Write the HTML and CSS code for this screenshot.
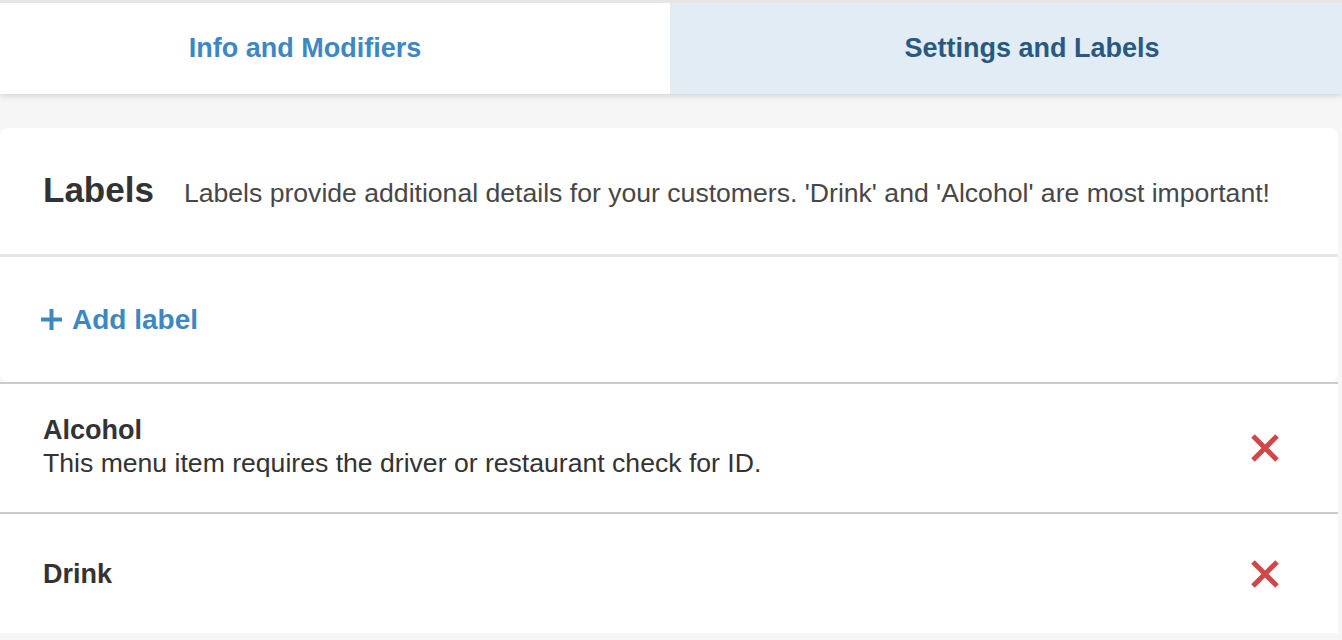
FILE: index.html
```html
<!DOCTYPE html>
<html lang="en">
<head>
    <meta charset="UTF-8">
    <meta name="viewport" content="width=device-width, initial-scale=1.0">
    <title>Settings and Labels</title>
    <link rel="stylesheet" href="styles.css">
</head>
<body>
    <nav class="tabs">
        <a class="tab tab-info" href="#">Info and Modifiers</a>
        <a class="tab tab-settings active" href="#">Settings and Labels</a>
    </nav>

    <main class="content">
        <section class="card">
            <div class="card-head">
                <h2>Labels</h2>
                <p>Labels provide additional details for your customers. 'Drink' and 'Alcohol' are most important!</p>
            </div>
            <div class="add-row">
                <button class="add-btn" type="button">
                    <svg class="plus" width="21" height="21" viewBox="0 0 21 21"><path d="M10.5 0 V21 M0 10.5 H21" stroke="#3d87c4" stroke-width="4"/></svg>
                    Add label
                </button>
            </div>
        </section>

        <ul class="label-list">
            <li class="label-row">
                <div class="label-text">
                    <strong>Alcohol</strong>
                    <span>This menu item requires the driver or restaurant check for ID.</span>
                </div>
                <button class="remove-btn" type="button" aria-label="Remove Alcohol">
                    <svg width="30" height="30" viewBox="0 0 30 30"><path d="M3 3 L27 27 M27 3 L3 27" stroke="#d14646" stroke-width="5"/></svg>
                </button>
            </li>
            <li class="label-row">
                <div class="label-text">
                    <strong>Drink</strong>
                </div>
                <button class="remove-btn" type="button" aria-label="Remove Drink">
                    <svg width="30" height="30" viewBox="0 0 30 30"><path d="M3 3 L27 27 M27 3 L3 27" stroke="#d14646" stroke-width="5"/></svg>
                </button>
            </li>
        </ul>
    </main>
</body>
</html>
```

FILE: styles.css
```css
body {
    font-family: "Liberation Sans", Arial, sans-serif;
    background-color: #f6f6f6;
    margin: 0;
    padding: 0;
    color: #333;
}
.tabs {
    display: grid;
    grid-template-columns: 670px 1fr;
    height: 91px;
    border-top: 3px solid #e6e6e6;
    background-color: #fff;
    box-shadow: 0 2px 6px rgba(0, 0, 0, 0.14);
    position: relative;
}
.tab {
    display: flex;
    align-items: center;
    justify-content: center;
    font-size: 27px;
    font-weight: bold;
    text-decoration: none;
    color: #3d87c4;
}
.tab-info {
    padding-right: 60px;
}
.tab-settings {
    padding-left: 52px;
}
.tab.active {
    background-color: #e1ecf5;
    color: #2a597f;
}
.content {
    padding-top: 34px;
    padding-right: 4px;
}
.card {
    background-color: #fff;
    border-radius: 8px;
}
.card-head {
    display: flex;
    align-items: baseline;
    gap: 30px;
    height: 129px;
    padding: 42px 43px 0;
    box-sizing: border-box;
    border-bottom: 3px solid #e6e6e6;
}
.card-head h2 {
    margin: 0;
    font-size: 35px;
    color: #333;
}
.card-head p {
    margin: 0;
    font-size: 26.6px;
    color: #474747;
}
.add-row {
    display: flex;
    align-items: center;
    height: 125px;
    padding-left: 41px;
}
.add-btn {
    display: flex;
    align-items: center;
    gap: 10px;
    border: none;
    background: none;
    padding: 0;
    font-family: inherit;
    font-size: 28px;
    font-weight: bold;
    color: #3d87c4;
    cursor: pointer;
}
.label-list {
    list-style: none;
    margin: 0;
    padding: 0;
}
.label-row {
    display: flex;
    align-items: center;
    justify-content: space-between;
    padding: 31px 45px 31px 43px;
    background-color: #fff;
    border-top: 2px solid #cccccc;
}
.label-text {
    display: flex;
    flex-direction: column;
}
.label-text strong {
    font-size: 27px;
    line-height: 30px;
    color: #333;
}
.label-text span {
    font-size: 26.6px;
    line-height: 36px;
    color: #333;
}
.remove-btn {
    width: 57px;
    height: 57px;
    border: none;
    background: none;
    padding: 0;
    display: flex;
    align-items: center;
    justify-content: center;
    cursor: pointer;
}
```
